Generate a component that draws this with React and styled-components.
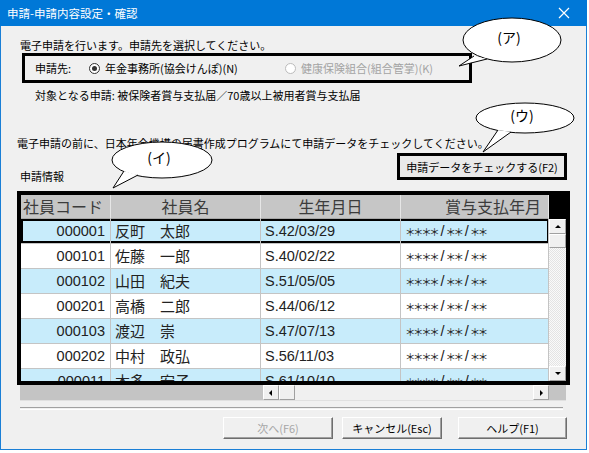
import React from "react"
import styled, { createGlobalStyle } from "styled-components"

const GlobalStyle = createGlobalStyle`
  html, body {
    margin: 0;
    padding: 0;
    background: #ffffff;
  }
  body {
    font-family: "Noto Sans CJK JP", "Liberation Sans", sans-serif;
    font-size: 11px;
    color: #000;
  }
`

const rows = [
  { code: "000001", name: "反町　太郎", birth: "S.42/03/29" },
  { code: "000101", name: "佐藤　一郎", birth: "S.40/02/22" },
  { code: "000102", name: "山田　紀夫", birth: "S.51/05/05" },
  { code: "000201", name: "高橋　二郎", birth: "S.44/06/12" },
  { code: "000103", name: "渡辺　崇", birth: "S.47/07/13" },
  { code: "000202", name: "中村　政弘", birth: "S.56/11/03" },
  { code: "000011", name: "本多　宏子", birth: "S.61/10/10" },
]

const columns = [
  { key: "code", label: "社員コード", width: 90, align: "left" },
  { key: "name", label: "社員名", width: 150, align: "center" },
  { key: "birth", label: "生年月日", width: 140, align: "center" },
  { key: "bonus", label: "賞与支払年月", width: 148, align: "right" },
]

// masked date: star groups use the full-width glyph, packed tight
function Masked({ groups }) {
  return (
    <>
      {groups.map((n, i) => (
        <React.Fragment key={i}>
          {i > 0 && <Slash>/</Slash>}
          <Stars>{"＊".repeat(n)}</Stars>
        </React.Fragment>
      ))}
    </>
  )
}

export default function App() {
  return (
    <>
      <GlobalStyle />
      <Window>
        <TitleBar>
          <Title>申請-申請内容設定・確認</Title>
          <CloseButton>
            <svg width="12" height="12" viewBox="0 0 12 12">
              <path d="M1 1 L11 11 M11 1 L1 11" stroke="#fff" strokeWidth="1.2" />
            </svg>
          </CloseButton>
        </TitleBar>

        <Body>
          <Line $top={12}>電子申請を行います。申請先を選択してください。</Line>

          <TargetBox>
            <TargetLabel>申請先:</TargetLabel>
            <RadioItem $width={196}>
              <Radio $checked />
              <span>年金事務所(協会けんぽ)(N)</span>
            </RadioItem>
            <RadioItem $disabled>
              <Radio $disabled />
              <span>健康保険組合(組合管掌)(K)</span>
            </RadioItem>
          </TargetBox>

          <Line $top={5} $left={15}>
            対象となる申請: 被保険者賞与支払届／70歳以上被用者賞与支払届
          </Line>

          <Line $top={34} $left={-3}>
            電子申請の前に、日本年金機構の届書作成プログラムにて申請データをチェックしてください。
          </Line>

          <CheckRow>
            <SectionLabel>申請情報</SectionLabel>
            <CheckButton>申請データをチェックする(F2)</CheckButton>
          </CheckRow>

          <GridFrame>
            <GridMain>
              <HeaderRow>
                {columns.map((c) => (
                  <HeaderCell key={c.key} $width={c.width} $align={c.align}>
                    {c.label}
                  </HeaderCell>
                ))}
              </HeaderRow>
              {rows.map((r, i) => (
                <DataRow key={r.code} $alt={i % 2 === 0} $focused={i === 0}>
                  <Cell $width={90} $right>{r.code}</Cell>
                  <Cell $width={150} $cjk>{r.name}</Cell>
                  <Cell $width={140}>{r.birth}</Cell>
                  <Cell $width={148}>
                    <Masked groups={[4, 2, 2]} />
                  </Cell>
                </DataRow>
              ))}
            </GridMain>
            <VScroll>
              <ScrollButton $h={15}>
                <Arrow dir="up" />
              </ScrollButton>
              <ScrollButton $h={14} />
              <Track />
              <ScrollButton $h={15}>
                <Arrow dir="down" />
              </ScrollButton>
            </VScroll>
          </GridFrame>

          <HScroll>
            <HScrollBlank />
            <HButton>
              <Arrow dir="left" />
            </HButton>
            <HButton />
            <HTrack />
            <HButton>
              <Arrow dir="right" />
            </HButton>
            <HCorner />
          </HScroll>

          <Separator />

          <ButtonRow>
            <DialogButton $width={110} $disabled>次へ(F6)</DialogButton>
            <DialogButton $width={100} $gap={9}>キャンセル(Esc)</DialogButton>
            <DialogButton $width={109} $gap={16}>ヘルプ(F1)</DialogButton>
          </ButtonRow>
        </Body>

        <Callout label="(ア)" cx={511} cy={40} rx={49} ry={22} a={[473, 56]} tip={[458, 66]} b={[486, 59]} />
        <Callout label="(イ)" cx={161} cy={160} rx={50} ry={18} a={[123, 171]} tip={[112, 188]} b={[137, 175]} />
        <Callout label="(ウ)" cx={524} cy={118} rx={49} ry={15} a={[497, 130]} tip={[482, 152]} b={[510, 132]} />
      </Window>
    </>
  )
}

function Arrow({ dir }) {
  const shapes = {
    up: "M1 5 L4 2 L7 5 Z",
    down: "M1 2 L4 5 L7 2 Z",
    left: "M5 1 L2 4 L5 7 Z",
    right: "M3 1 L6 4 L3 7 Z",
  }
  return (
    <svg width="8" height="8" viewBox="0 0 8 8">
      <path d={shapes[dir]} fill="#000" />
    </svg>
  )
}

// speech bubble drawn over the dialog; tail is an open path so its fill hides the ellipse edge
function Callout({ label, cx, cy, rx, ry, a, tip, b }) {
  return (
    <Overlay width="589" height="453" viewBox="0 0 589 453">
      <ellipse cx={cx} cy={cy} rx={rx} ry={ry} fill="#fff" stroke="#000" strokeWidth="1" />
      <path
        d={`M${a[0]} ${a[1]} L${tip[0]} ${tip[1]} L${b[0]} ${b[1]}`}
        fill="#fff"
        stroke="#000"
        strokeWidth="1"
      />
      <text
        x={cx - 3}
        y={cy + 3}
        textAnchor="middle"
        fontSize="14"
        fontFamily="Noto Sans CJK JP, sans-serif"
      >
        {label}
      </text>
    </Overlay>
  )
}

const Window = styled.div`
  position: relative;
  width: 587px;
  height: 450px;
  box-sizing: border-box;
  background: #f0f0f0;
  border: 1px solid #1a7fd6;
  border-top: none;
  display: flex;
  flex-direction: column;
`

const TitleBar = styled.div`
  height: 26px;
  margin: 0 -1px;
  background: #0078d7;
  color: #fff;
  display: flex;
  align-items: center;
  justify-content: space-between;
  padding-left: 7px;
`

const Title = styled.div`
  font-size: 11.5px;
  line-height: 14px;
`

const CloseButton = styled.div`
  width: 46px;
  height: 26px;
  display: flex;
  align-items: center;
  justify-content: center;
`

const Body = styled.div`
  display: flex;
  flex-direction: column;
  padding: 0 19px;
`

const Line = styled.div`
  margin-top: ${(p) => p.$top || 0}px;
  margin-left: ${(p) => p.$left || 0}px;
  line-height: 14px;
  white-space: nowrap;
`

const TargetBox = styled.div`
  margin: 1px 0 0 2px;
  width: 450px;
  height: 30px;
  box-sizing: border-box;
  border: 3px solid #000;
  display: flex;
  align-items: center;
  padding-left: 10px;
  line-height: 14px;
`

const TargetLabel = styled.span`
  width: 54px;
`

const RadioItem = styled.label`
  display: flex;
  align-items: center;
  gap: 5px;
  width: ${(p) => (p.$width ? `${p.$width}px` : "auto")};
  color: ${(p) => (p.$disabled ? "#a3a3a3" : "#000")};
`

const Radio = styled.span`
  width: 11px;
  height: 11px;
  box-sizing: border-box;
  border-radius: 50%;
  border: 1px solid ${(p) => (p.$disabled ? "#bcbcbc" : "#333")};
  background: #fff;
  display: flex;
  align-items: center;
  justify-content: center;
  &::after {
    content: "";
    width: 5px;
    height: 5px;
    border-radius: 50%;
    background: #333;
    display: ${(p) => (p.$checked ? "block" : "none")};
  }
`

const CheckRow = styled.div`
  margin-top: 3px;
  height: 36px;
  display: flex;
  justify-content: space-between;
  align-items: flex-start;
`

const SectionLabel = styled.div`
  align-self: flex-end;
  line-height: 14px;
  margin-bottom: 6px;
`

const CheckButton = styled.div`
  width: 170px;
  height: 27px;
  box-sizing: border-box;
  border: 3px solid #000;
  background: #e9e9e9;
  display: flex;
  align-items: center;
  justify-content: center;
  line-height: 14px;
`

const GridFrame = styled.div`
  margin: 2px 0 0 -3px;
  width: 553px;
  height: 194px;
  box-sizing: border-box;
  border: 4px solid #000;
  background: #000;
  display: flex;
  overflow: hidden;
`

const GridMain = styled.div`
  width: 528px;
  display: flex;
  flex-direction: column;
  background: #fff;
`

const HeaderRow = styled.div`
  display: flex;
  height: 24px;
  flex-shrink: 0;
  background: #c6c6c6;
`

const HeaderCell = styled.div`
  width: ${(p) => p.$width}px;
  box-sizing: border-box;
  border-right: 1px solid #e6e6e6;
  border-bottom: 1px solid #a8a8a8;
  font-size: 16px;
  line-height: 23px;
  color: #3c3c3c;
  text-align: ${(p) => p.$align};
  padding: ${(p) => (p.$align === "right" ? "0 7px 0 0" : p.$align === "left" ? "0 0 0 2px" : "0")};
  white-space: nowrap;
`

const DataRow = styled.div`
  display: flex;
  height: 25px;
  flex-shrink: 0;
  box-sizing: border-box;
  background: ${(p) => (p.$alt ? "#c8ecfb" : "#fff")};
  border-bottom: 1px solid #c4c4c4;
  box-shadow: ${(p) => (p.$focused ? "inset 0 0 0 2px #000" : "none")};
`

const Cell = styled.div`
  width: ${(p) => p.$width}px;
  box-sizing: border-box;
  border-right: 1px solid #c4c4c4;
  font-family: "Liberation Sans", "Noto Sans CJK JP", sans-serif;
  font-size: ${(p) => (p.$cjk ? "15px" : "14.5px")};
  color: #222;
  line-height: 25px;
  text-align: ${(p) => (p.$right ? "right" : "left")};
  padding: ${(p) => (p.$right ? "0 5px 0 0" : "0 0 0 4px")};
  white-space: nowrap;
  overflow: hidden;
`

const Stars = styled.span`
  font-family: "Noto Sans CJK JP", sans-serif;
  font-size: 10.5px;
  letter-spacing: -2.4px;
`

const Slash = styled.span`
  margin: 0 1px 0 3px;
`

const VScroll = styled.div`
  width: 17px;
  display: flex;
  flex-direction: column;
  padding-top: 24px;
`

const ScrollButton = styled.div`
  height: ${(p) => p.$h}px;
  flex-shrink: 0;
  box-sizing: border-box;
  background: #f0f0f0;
  border-top: 1px solid #fff;
  border-left: 1px solid #fff;
  border-right: 1px solid #a0a0a0;
  border-bottom: 1px solid #a0a0a0;
  display: flex;
  align-items: center;
  justify-content: center;
`

const Track = styled.div`
  flex: 1;
  background-color: #f4f4f4;
  background-image: repeating-conic-gradient(#e4e4e4 0 25%, #fafafa 0 50%);
  background-size: 2px 2px;
`

const HScroll = styled.div`
  width: 546px;
  height: 15px;
  display: flex;
  background: #c4c4c4;
  border-bottom: 1px solid #e0e0e0;
`

const HScrollBlank = styled.div`
  width: 243px;
`

const HButton = styled.div`
  width: 16px;
  box-sizing: border-box;
  background: #f0f0f0;
  border-top: 1px solid #fff;
  border-left: 1px solid #fff;
  border-right: 1px solid #a0a0a0;
  border-bottom: 1px solid #a0a0a0;
  display: flex;
  align-items: center;
  justify-content: center;
`

const HTrack = styled.div`
  flex: 1;
  background: #f0f0f0;
`

const HCorner = styled.div`
  width: 17px;
  background: #c4c4c4;
`

const Separator = styled.div`
  margin-top: 6px;
  width: 543px;
  height: 1px;
  border-top: 1px solid #a0a0a0;
  border-bottom: 1px solid #fff;
`

const ButtonRow = styled.div`
  margin-top: 7px;
  display: flex;
  justify-content: flex-end;
`

const DialogButton = styled.div`
  width: ${(p) => p.$width}px;
  height: 22px;
  margin-left: ${(p) => p.$gap || 0}px;
  box-sizing: border-box;
  background: #f0f0f0;
  border-top: 1px solid #fff;
  border-left: 1px solid #fff;
  border-right: 1px solid #6e6e6e;
  border-bottom: 1px solid #6e6e6e;
  box-shadow: inset -1px -1px 0 #a0a0a0;
  color: ${(p) => (p.$disabled ? "#a6a6a6" : "#000")};
  display: flex;
  align-items: center;
  justify-content: center;
  line-height: 14px;
`

const Overlay = styled.svg`
  position: absolute;
  left: 0;
  top: 0;
  pointer-events: none;
  overflow: visible;
`
